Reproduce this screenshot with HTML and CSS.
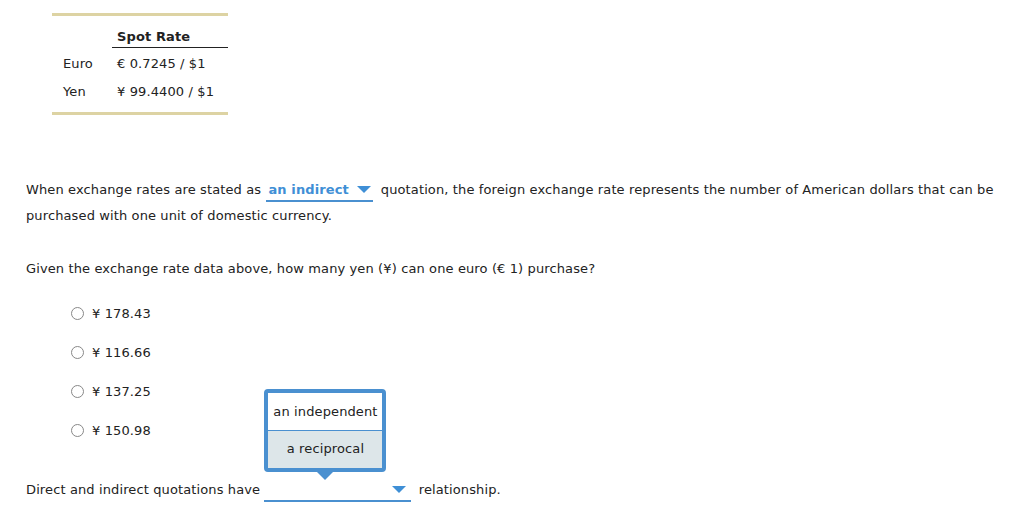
FILE: index.html
```html
<!DOCTYPE html>
<html>
<head>
<meta charset="utf-8">
<link rel="stylesheet" href="styles.css">
</head>
<body>
<div class="page">
  <div class="rates">
    <table class="rate-table">
      <thead>
        <tr><th class="lbl"></th><th class="val">Spot Rate</th></tr>
      </thead>
      <tbody>
        <tr><td class="lbl">Euro</td><td class="val">€ 0.7245 / $1</td></tr>
        <tr><td class="lbl">Yen</td><td class="val">¥ 99.4400 / $1</td></tr>
      </tbody>
    </table>
  </div>

  <p class="para">When exchange rates are stated as <span class="dd dd-filled">an indirect <span class="caret"></span></span> quotation, the foreign exchange rate represents the number of American dollars that can be purchased with one unit of domestic currency.</p>

  <p class="question">Given the exchange rate data above, how many yen (¥) can one euro (€ 1) purchase?</p>

  <ul class="options">
    <li><span class="radio"></span>¥ 178.43</li>
    <li><span class="radio"></span>¥ 116.66</li>
    <li><span class="radio"></span>¥ 137.25</li>
    <li><span class="radio"></span>¥ 150.98</li>
  </ul>

  <p class="last">Direct and indirect quotations have <span class="dd dd-empty">&#8203;<span class="caret"></span><span class="popup"><span class="opt">an independent</span><span class="opt sel">a reciprocal</span><span class="pointer"></span></span></span> relationship.</p>
</div>
</body>
</html>
```

FILE: styles.css
```css
html, body {
  margin: 0;
  padding: 0;
  background: #fff;
}
body {
  font-family: "DejaVu Sans", Verdana, sans-serif;
  font-size: 13px;
  letter-spacing: 0.12px;
  color: #222;
}
.page {
  padding: 13px 0 0 26px;
}
.rates {
  margin-left: 26px;
  width: 176px;
  border-top: 3px solid #ddd3a3;
  border-bottom: 3px solid #ddd3a3;
  padding-bottom: 6px;
}
.rate-table {
  border-collapse: collapse;
  width: 176px;
}
.rate-table th, .rate-table td {
  padding: 0;
  line-height: 16px;
  text-align: left;
}
.rate-table th {
  font-weight: bold;
  padding-top: 13px;
  padding-bottom: 2px;
}
.rate-table th.val {
  border-bottom: 1px solid #222;
}
.rate-table .lbl {
  width: 60px;
  padding-left: 11px;
  box-sizing: border-box;
}
.rate-table .val {
  padding-left: 5px;
}
.rate-table tbody td {
  height: 28px;
}
.rate-table tbody tr:first-child td {
  padding-top: 2px;
}
.para {
  margin: 62px 0 0 0;
  line-height: 26px;
  max-width: 990px;
}
.dd {
  display: inline-block;
  position: relative;
  line-height: 20px;
  border-bottom: 2px solid #4a90d0;
  vertical-align: baseline;
}
.dd-filled {
  color: #3f8fd6;
  font-weight: bold;
  padding: 0 2px 0 2px;
  margin-left: 1px;
  margin-right: 4px;
}
.caret {
  display: inline-block;
  width: 0;
  height: 0;
  border-left: 7px solid transparent;
  border-right: 7px solid transparent;
  border-top: 7px solid #3f8fd6;
  margin-left: 3px;
  vertical-align: 1px;
}
.dd-empty {
  width: 147px;
  text-align: right;
  margin-left: 0;
  margin-right: 3px;
}
.dd-empty .caret {
  margin-right: 5px;
}
.question {
  margin: 27px 0 0 0;
  line-height: 26px;
}
.options {
  list-style: none;
  margin: 12px 0 0 0;
  padding: 0 0 0 45px;
}
.options li {
  height: 39px;
  display: flex;
  align-items: center;
}
.radio {
  display: inline-block;
  width: 13px;
  height: 13px;
  border: 1px solid #888;
  border-radius: 50%;
  margin-right: 8px;
  box-sizing: border-box;
}
.last {
  margin: 27px 0 0 0;
  line-height: 26px;
}
.popup {
  position: absolute;
  left: 0;
  bottom: 28px;
  width: 122px;
  box-sizing: border-box;
  border: 4px solid #4a90d0;
  border-radius: 4px;
  background: #fff;
  display: flex;
  flex-direction: column;
  text-align: center;
  color: #222;
  font-weight: normal;
  line-height: 16px;
}
.opt {
  display: block;
  box-sizing: border-box;
  height: 37px;
  line-height: 37px;
}
.opt.sel {
  background: #dde6e9;
  border-top: 1px solid #4a90d0;
  height: 38px;
  line-height: 36px;
}
.pointer {
  position: absolute;
  left: 50%;
  bottom: -12px;
  margin-left: -8px;
  width: 0;
  height: 0;
  border-left: 8px solid transparent;
  border-right: 8px solid transparent;
  border-top: 8px solid #4a90d0;
}
```
